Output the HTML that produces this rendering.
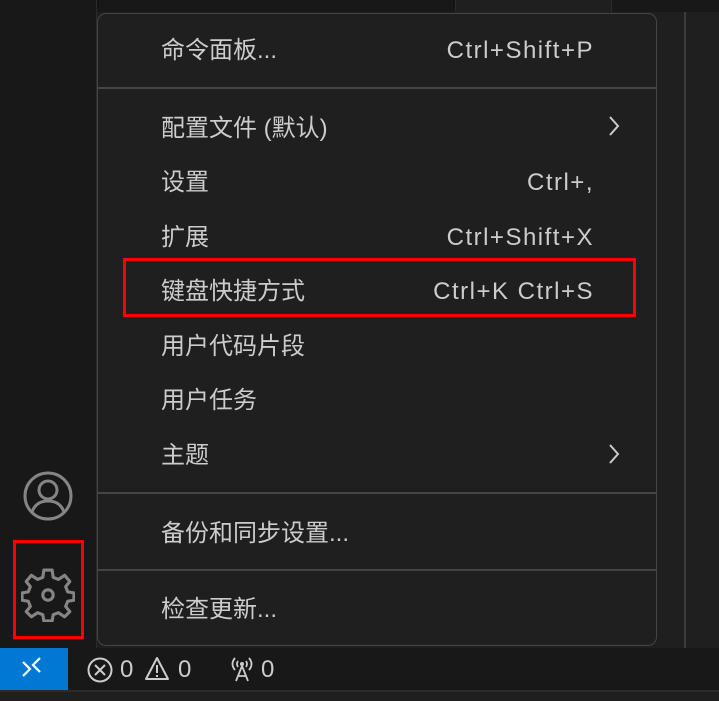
<!DOCTYPE html>
<html><head><meta charset="utf-8"><style>
html,body{margin:0;padding:0;width:719px;height:701px;overflow:hidden;background:#1f1f1f;font-family:"Liberation Sans","Noto Sans CJK SC",sans-serif;}
.abs{position:absolute}
.menu{left:97px;top:13px;width:560px;height:633px;background:#1f1f1f;border:1px solid #454545;border-radius:9px;box-sizing:border-box}
.it{position:absolute;left:161px;font-size:24px;color:#cccccc;line-height:30px;white-space:nowrap}
.sc{position:absolute;right:125px;font-size:24px;color:#cccccc;line-height:30px;white-space:nowrap;letter-spacing:1.5px}
.sep{position:absolute;left:98px;width:558px;height:2px;background:#454545}
.chev{position:absolute;left:607px;width:14px;height:24px}
</style></head><body>
<div class="abs" style="left:0;top:0;width:96px;height:648px;background:#181818"></div>
<div class="abs" style="left:96px;top:0;width:1px;height:648px;background:#2b2b2b"></div>
<div class="abs" style="left:97px;top:0;width:622px;height:12px;background:#181818"></div>
<div class="abs" style="left:455px;top:0;width:155px;height:12px;background:#1f1f1f;border-left:1px solid #2b2b2b;border-right:1px solid #2b2b2b"></div>
<div class="abs" style="left:684px;top:12px;width:2px;height:636px;background:#3c3c3c"></div>
<div class="abs menu"></div>
<div class="it" style="top:36px">命令面板...</div><div class="sc" style="top:36px">Ctrl+Shift+P</div>
<div class="sep" style="top:87px"></div>
<div class="it" style="top:114px">配置文件 (默认)</div>
<svg class="chev" style="top:114px" viewBox="0 0 14 24"><path d="M3 3 L11 12 L3 21" fill="none" stroke="#cccccc" stroke-width="2"/></svg>
<div class="it" style="top:168px">设置</div><div class="sc" style="top:168px">Ctrl+,</div>
<div class="it" style="top:223px">扩展</div><div class="sc" style="top:223px">Ctrl+Shift+X</div>
<div class="it" style="top:277px">键盘快捷方式</div><div class="sc" style="top:277px">Ctrl+K Ctrl+S</div>
<div class="it" style="top:332px">用户代码片段</div>
<div class="it" style="top:386px">用户任务</div>
<div class="it" style="top:441px">主题</div>
<svg class="chev" style="top:442px" viewBox="0 0 14 24"><path d="M3 3 L11 12 L3 21" fill="none" stroke="#cccccc" stroke-width="2"/></svg>
<div class="sep" style="top:492px"></div>
<div class="it" style="top:519px">备份和同步设置...</div>
<div class="sep" style="top:569px"></div>
<div class="it" style="top:595px">检查更新...</div>
<div class="abs" style="left:123px;top:258px;width:513px;height:59px;border:3px solid #ff0000;box-sizing:border-box"></div>
<div class="abs" style="left:13px;top:540px;width:71px;height:99px;border:3px solid #ff0000;box-sizing:border-box"></div>
<svg class="abs" style="left:22px;top:470px" width="52" height="52" viewBox="0 0 52 52"><circle cx="26" cy="26" r="23" fill="none" stroke="#858585" stroke-width="3"/><circle cx="26" cy="20" r="9" fill="none" stroke="#858585" stroke-width="3"/><path d="M10 42 Q14 31 26 31 Q38 31 42 42" fill="none" stroke="#858585" stroke-width="3"/></svg>
<svg class="abs" style="left:21px;top:568px" width="54" height="54" viewBox="0 0 52 52"><path d="M22 2 H30 L31 9 L36 11 L42 7 L47 13 L43 18 L45 23 L51 24 V31 L45 32 L43 37 L47 42 L42 47 L36 43 L31 45 L30 51 H22 L21 45 L16 43 L10 47 L5 42 L9 37 L7 32 L1 31 V24 L7 23 L9 18 L5 13 L10 7 L16 11 L21 9 Z" fill="none" stroke="#858585" stroke-width="3" stroke-linejoin="round"/><circle cx="26" cy="26" r="5" fill="none" stroke="#858585" stroke-width="3"/></svg>
<div class="abs" style="left:0;top:648px;width:719px;height:42px;background:#181818"></div>
<div class="abs" style="left:0;top:690px;width:719px;height:2px;background:#2b2b2b"></div>
<div class="abs" style="left:0;top:648px;width:68px;height:42px;background:#0078d4"></div>
<svg class="abs" style="left:20px;top:656px" width="28" height="26" viewBox="0 0 28 26"><path d="M3 6 L10 13 L3 20 M20 2 L13 9 L20 16" fill="none" stroke="#fff" stroke-width="2.2"/></svg>
<svg class="abs" style="left:86px;top:656px" width="28" height="28" viewBox="0 0 28 28"><circle cx="14" cy="14" r="11.5" fill="none" stroke="#cccccc" stroke-width="2"/><path d="M9 9 L19 19 M19 9 L9 19" stroke="#cccccc" stroke-width="2"/></svg>
<div class="abs" style="left:120px;top:655px;font-size:24px;color:#cccccc;line-height:30px">0</div>
<svg class="abs" style="left:143px;top:655px" width="28" height="28" viewBox="0 0 28 28"><path d="M14 3 L25 24 H3 Z" fill="none" stroke="#cccccc" stroke-width="2" stroke-linejoin="round"/><path d="M14 10 V18 M14 20 V22" stroke="#cccccc" stroke-width="2"/></svg>
<div class="abs" style="left:178px;top:655px;font-size:24px;color:#cccccc;line-height:30px">0</div>
<svg class="abs" style="left:227px;top:654px" width="30" height="30" viewBox="0 0 30 30"><path d="M8 4 Q3 10 8 16 M22 4 Q27 10 22 16 M11 7 Q9 10 11 13 M19 7 Q21 10 19 13" fill="none" stroke="#cccccc" stroke-width="1.8"/><circle cx="15" cy="10" r="2" fill="#cccccc"/><path d="M15 12 L9 27 M15 12 L21 27 M11 22 H19" fill="none" stroke="#cccccc" stroke-width="1.8"/></svg>
<div class="abs" style="left:261px;top:655px;font-size:24px;color:#cccccc;line-height:30px">0</div>
</body></html>
